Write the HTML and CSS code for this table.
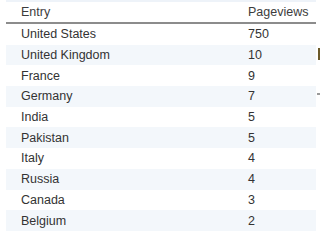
FILE: index.html
```html
<!DOCTYPE html>
<html>
<head>
<meta charset="utf-8">
<link rel="stylesheet" href="styles.css">
</head>
<body>
<div class="page">
  <div class="topband"></div>
  <table class="grid">
    <thead>
      <tr><th class="c-entry">Entry</th><th class="c-pv">Pageviews</th></tr>
    </thead>
    <tbody>
      <tr><td class="c-entry">United States</td><td class="c-pv">750</td></tr>
      <tr class="alt"><td class="c-entry">United Kingdom</td><td class="c-pv">10</td></tr>
      <tr><td class="c-entry">France</td><td class="c-pv">9</td></tr>
      <tr class="alt"><td class="c-entry">Germany</td><td class="c-pv">7</td></tr>
      <tr><td class="c-entry">India</td><td class="c-pv">5</td></tr>
      <tr class="alt"><td class="c-entry">Pakistan</td><td class="c-pv">5</td></tr>
      <tr><td class="c-entry">Italy</td><td class="c-pv">4</td></tr>
      <tr class="alt"><td class="c-entry">Russia</td><td class="c-pv">4</td></tr>
      <tr><td class="c-entry">Canada</td><td class="c-pv">3</td></tr>
      <tr class="alt"><td class="c-entry">Belgium</td><td class="c-pv">2</td></tr>
    </tbody>
  </table>
  <div class="edge e1"></div>
  <div class="edge e2"></div>
</div>
</body>
</html>
```
FILE: styles.css
```css
html, body {
  margin: 0;
  padding: 0;
  background: #ffffff;
}
.page {
  position: relative;
  width: 320px;
  height: 247px;
  overflow: hidden;
  font-family: "Liberation Sans", Arial, sans-serif;
  font-size: 12.5px;
  color: #333333;
}
.topband {
  height: 2px;
  margin: 0 4px 0 6px;
  background: #eef3f9;
}
.grid {
  margin-left: 6px;
  width: 310px;
  border-collapse: collapse;
}
.grid th {
  font-weight: normal;
  text-align: left;
  color: #3c3c3c;
  height: 20px;
  padding: 0;
  border-bottom: 2px solid #8c8c8c;
  vertical-align: middle;
}
.grid td {
  height: 20.7px;
  padding: 0;
  vertical-align: middle;
}
.c-entry {
  padding-left: 15px !important;
}
.c-pv {
  width: 68px;
}
.grid tr.alt td {
  background: #f3f7fb;
}
.edge {
  position: absolute;
  right: 0;
  width: 3px;
}
.e1 {
  top: 48px;
  height: 12px;
  width: 2px;
  background: #6b5a2a;
}
.e2 {
  top: 93px;
  height: 2px;
  background: #9a9a9a;
}
```
